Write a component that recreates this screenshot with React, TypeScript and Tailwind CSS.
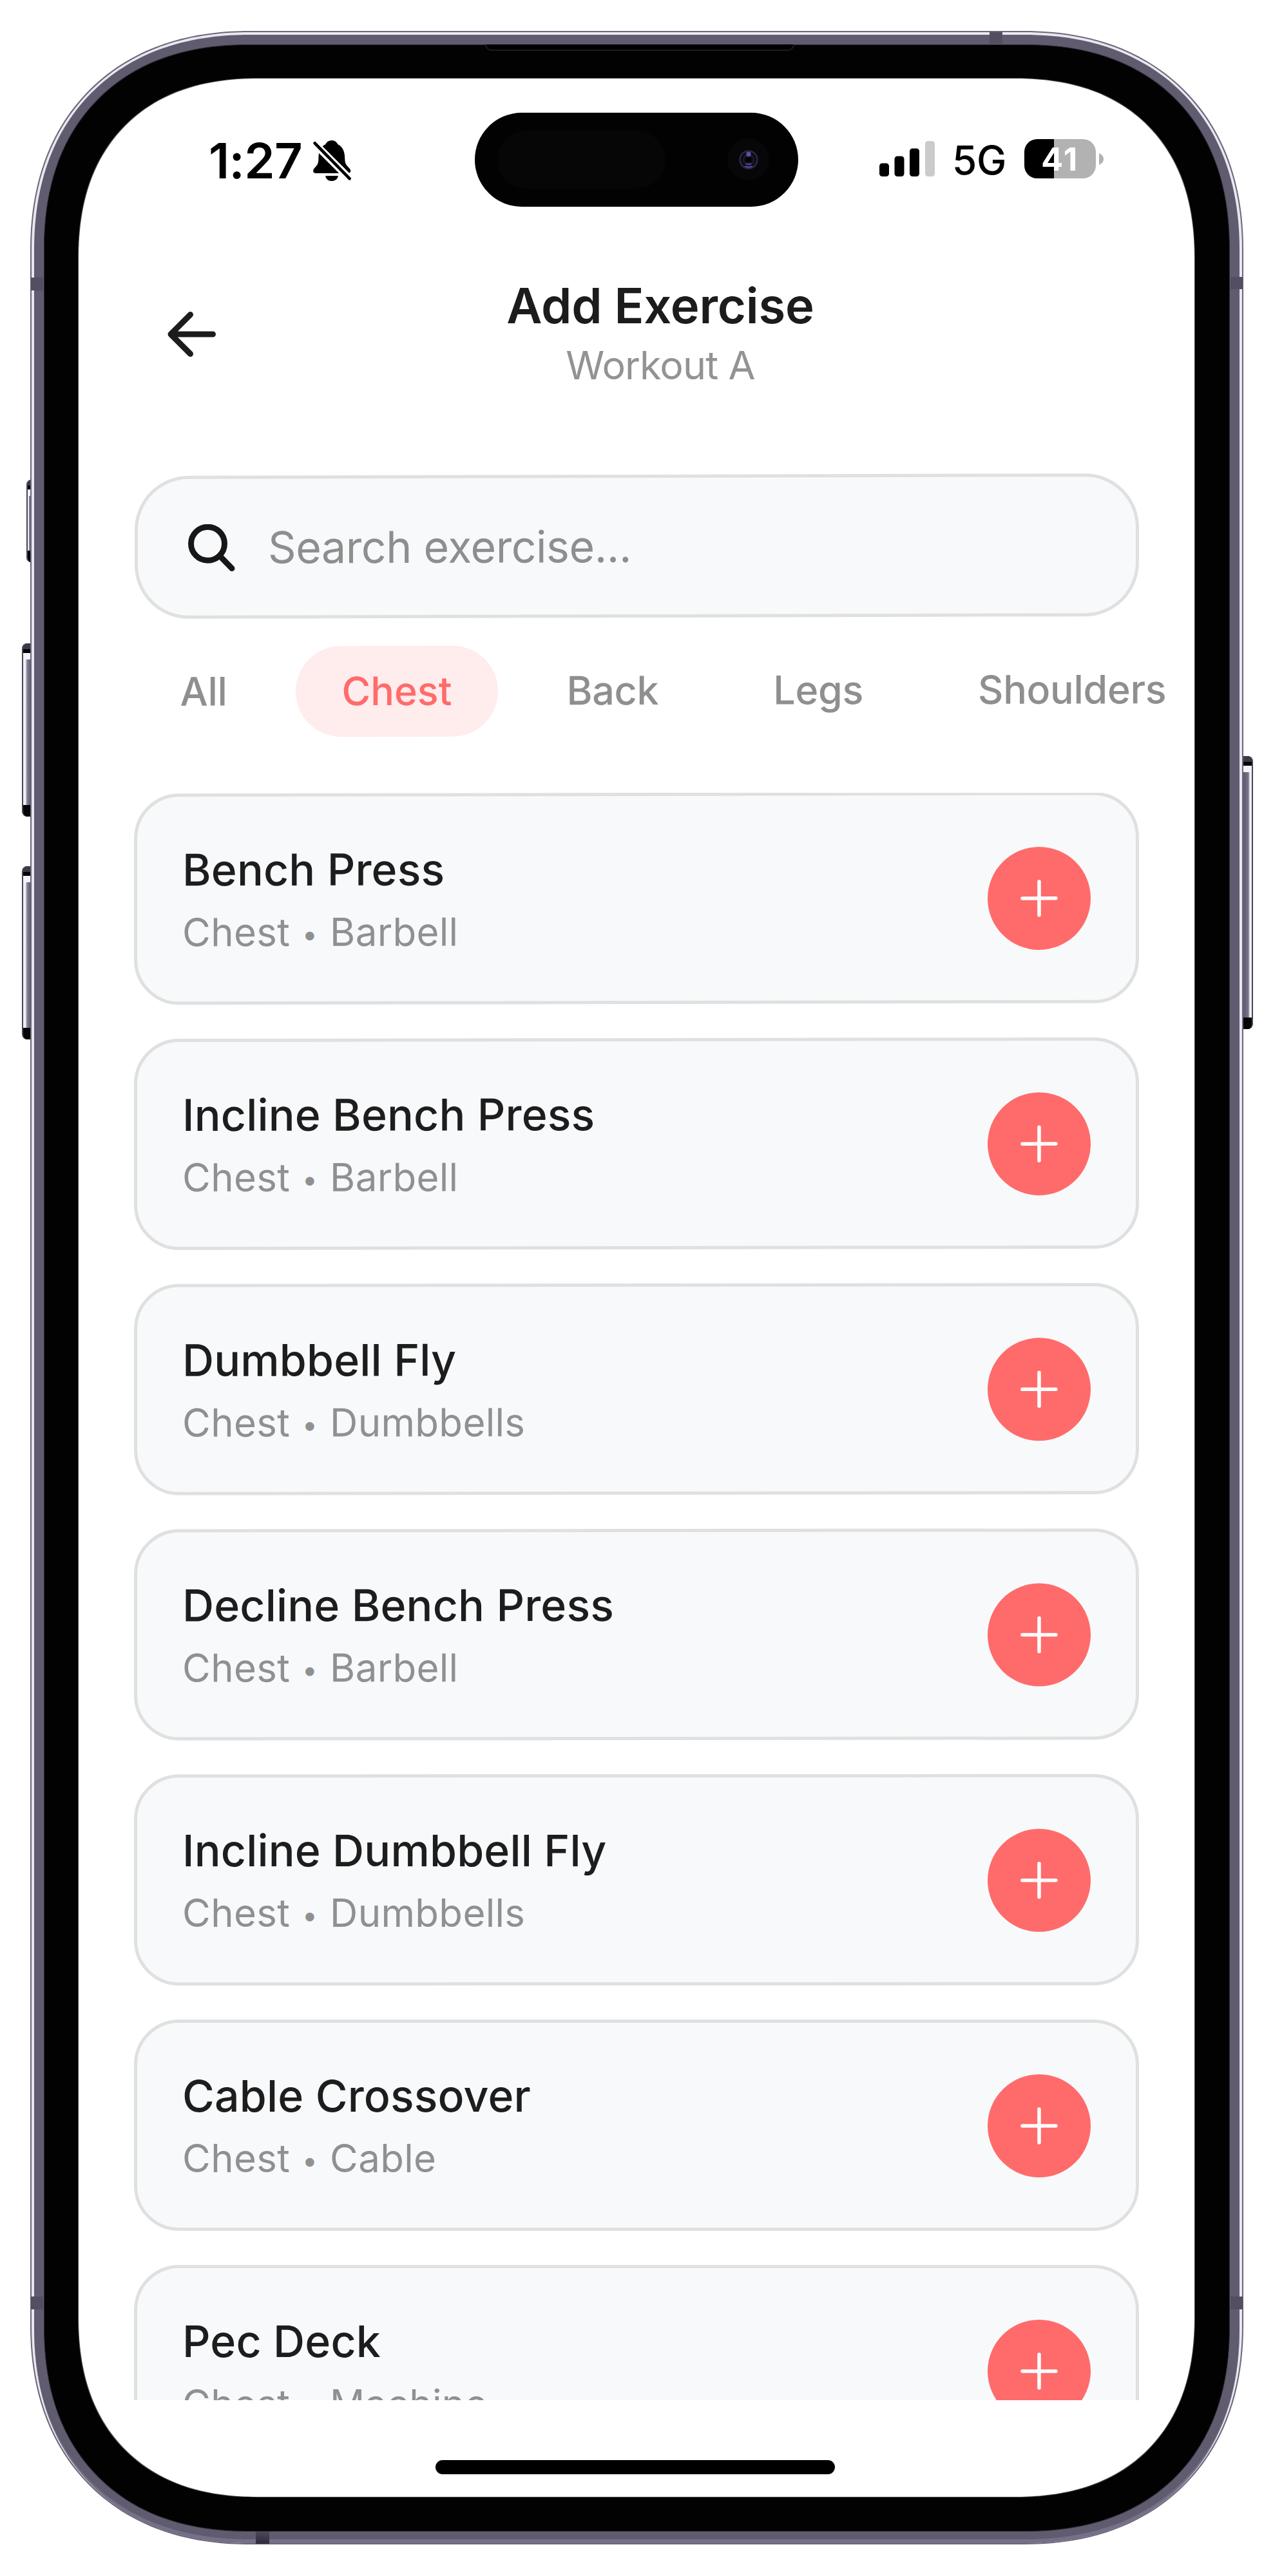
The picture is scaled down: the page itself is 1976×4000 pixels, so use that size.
type Exercise = { name: string; muscle: string; gear: string; tilt: string };

const exercises: Exercise[] = [
  { name: "Bench Press", muscle: "Chest", gear: "Barbell", tilt: "-skew-y-[0.1deg]" },
  { name: "Incline Bench Press", muscle: "Chest", gear: "Barbell", tilt: "-skew-y-[0.08deg]" },
  { name: "Dumbbell Fly", muscle: "Chest", gear: "Dumbbells", tilt: "-skew-y-[0.06deg]" },
  { name: "Decline Bench Press", muscle: "Chest", gear: "Barbell", tilt: "-skew-y-[0.04deg]" },
  { name: "Incline Dumbbell Fly", muscle: "Chest", gear: "Dumbbells", tilt: "-skew-y-[0.02deg]" },
  { name: "Cable Crossover", muscle: "Chest", gear: "Cable", tilt: "" },
  { name: "Pec Deck", muscle: "Chest", gear: "Machine", tilt: "" },
];

const filters = ["All", "Chest", "Back", "Legs", "Shoulders"];

function BellOff() {
  return (
    <svg className="ml-[17px] h-[63px] w-[59px] shrink-0" viewBox="0 0 176 188">
      <path
        d="M86 0C101 0 109 8 115 19C139 30 147 56 147 84C147 110 156 117 168 129C179 142 174 152 160 152H14C-1 152 -3 140 5 130C18 115 25 110 25 84C25 56 33 30 57 19C63 8 71 0 86 0Z"
        fill="#000"
      />
      <path d="M57 164H116C114 179 102 188 86 188C70 188 59 179 57 164Z" fill="#000" />
      <path d="M-6 2L184 192" stroke="#fff" strokeWidth="34" />
      <path d="M8 13L169 177" stroke="#000" strokeWidth="14" strokeLinecap="round" />
    </svg>
  );
}

function SignalBars() {
  return (
    <svg className="h-[55px] w-[86px] shrink-0" viewBox="0 0 86 55">
      <rect x="0" y="34.5" width="15" height="20.5" rx="4.5" fill="#000" />
      <rect x="23.5" y="23.5" width="15" height="31.5" rx="4.5" fill="#000" />
      <rect x="47" y="11.5" width="15" height="43.5" rx="4.5" fill="#000" />
      <rect x="71" y="0" width="15" height="55" rx="4.5" fill="#cbcbcb" />
    </svg>
  );
}

function Battery() {
  return (
    <div className="ml-[28px] flex items-center">
      <div className="flex h-[61px] w-[111px] items-center justify-center rounded-[20px] bg-linear-to-r from-black from-[41.5%] to-[#b2b2b2] to-[41.5%]">
        <span className="text-[50px] leading-none font-bold tracking-[2.5px] text-white">41</span>
      </div>
      <svg className="ml-[5px] h-[18px] w-[7px]" viewBox="0 0 7 18">
        <path d="M0 0C4 1.5 7 5 7 9C7 13 4 16.5 0 18Z" fill="#b2b2b2" />
      </svg>
    </div>
  );
}

function StatusBar() {
  return (
    <div className="flex h-[252px] shrink-0 items-center text-black">
      <div className="flex w-[615px] items-center pt-[2px] pl-[202px]">
        <span className="text-[76px] leading-none font-semibold tracking-[-0.6px]">1:27</span>
        <BellOff />
      </div>
      <div className="mt-[-1px] flex h-[146px] w-[502px] items-center rounded-full bg-[#020202] pl-[35px]">
        <div className="h-[90px] w-[261px] rounded-full bg-[#060606]" />
        <div className="ml-[96px] flex size-[65px] items-center justify-center rounded-full bg-[#070709]">
          <svg className="size-[30px]" viewBox="0 0 30 30">
            <circle cx="15" cy="15" r="13.5" fill="#0b0b12" stroke="#2b2842" strokeWidth="2.5" />
            <circle cx="15" cy="15" r="8" fill="none" stroke="#1c1a2a" strokeWidth="2.5" />
            <rect x="11.500" y="3" width="7" height="7" rx="2" fill="#5b50a8" />
            <path d="M9 25Q15 28 21 25M11 21Q15 23 19 21" stroke="#51479a" strokeWidth="2.5" fill="none" />
            <rect x="11" y="12" width="8" height="6" rx="2" fill="#000" />
          </svg>
        </div>
      </div>
      <div className="mt-[-3px] flex w-[615px] items-center pl-[126px]">
        <SignalBars />
        <span className="mt-[4px] ml-[27px] text-[62px] leading-none font-medium tracking-[-0.3px]">5G</span>
        <Battery />
      </div>
    </div>
  );
}

function Header() {
  return (
    <header className="flex shrink-0 items-center pt-[56px] pl-[138px]">
      <svg className="mt-[4px] h-[72px] w-[75px]" viewBox="0 0 75 72" fill="none" stroke="#1c1c1c" strokeWidth="9" strokeLinecap="round" strokeLinejoin="round">
        <path d="M70.500 36H5M35.500 5.500L5 36L35.500 66.500" />
      </svg>
      <div className="ml-[451px] flex w-[478px] flex-col items-center">
        <h1 className="-mt-[2px] text-[76px] leading-[92px] font-semibold tracking-[-0.2px] whitespace-nowrap text-[#1c1c1c]">Add Exercise</h1>
        <p className="mt-[10px] text-[61px] leading-[74px] tracking-[-0.9px] whitespace-nowrap text-[#939393]">Workout A</p>
      </div>
    </header>
  );
}

function SearchBox() {
  return (
    <div className="mt-[133px] ml-[87px] flex h-[222px] w-[1559px] shrink-0 -skew-y-[0.15deg] items-center rounded-[84px] border-[5px] border-[#dfe0e0] bg-[#f8f9fb] pl-[78px]">
      <svg className="mt-[2px] h-[74px] w-[73px]" viewBox="0 0 73 74" fill="none" stroke="#171717" strokeWidth="9" strokeLinecap="round">
        <circle cx="30.500" cy="30.500" r="26" />
        <path d="M49.500 50L68 69" />
      </svg>
      <span className="ml-[51px] text-[68px] leading-none tracking-[-0.45px] text-[#8d8f8f]">Search exercise...</span>
    </div>
  );
}

function Filters() {
  return (
    <nav className="mt-[43px] ml-[86px] flex h-[141px] shrink-0 -skew-y-[0.13deg] gap-[35px]">
      {filters.map((f) => (
        <div
          key={f}
          className={
            f === "Chest"
              ? "flex items-center rounded-full bg-[#ffecec] px-[71.500px] text-[61px] leading-none font-medium text-[#ff6b6b]"
              : "flex items-center rounded-full px-[71.500px] text-[61px] leading-none font-medium tracking-[-0.3px] text-[#8f8f8f]"
          }
        >
          {f}
        </div>
      ))}
    </nav>
  );
}

function ExerciseCard({ name, muscle, gear, tilt }: Exercise) {
  return (
    <li className={`flex h-[328px] w-[1560px] shrink-0 items-center justify-between rounded-[70px] border-[5px] border-[#dfe0e0] bg-[#f8f9fb] pr-[70px] pl-[70px] ${tilt}`}>
      <div className="pb-[1px]">
        <h2 className="text-[68px] leading-[82px] font-medium tracking-[0.15px] text-[#1d1d1d]">{name}</h2>
        <p className="mt-[20px] text-[60px] leading-[72px] tracking-[0.3px] text-[#8f9191]">
          {muscle}
          <span className="relative -top-[3px] inline-block w-[62px] text-center text-[43px] leading-none">•</span>
          {gear}
        </p>
      </div>
      <button className="mt-[2px] flex size-[160px] items-center justify-center rounded-full bg-[#ff6b6b]">
        <svg className="size-[58px]" viewBox="0 0 58 58" stroke="#fff" strokeWidth="5.500" strokeLinecap="round">
          <path d="M29 3V55M3 29H55" />
        </svg>
      </button>
    </li>
  );
}

function Screen() {
  return (
    <div className="flex h-[3755px] w-[1732px] flex-col overflow-hidden rounded-[280px] bg-white shadow-[0_0_0_1px_#4a4a4a] [corner-shape:superellipse(1.2)]">
      <StatusBar />
      <Header />
      <SearchBox />
      <Filters />
      <ul className="mt-[88px] flex h-[2496px] shrink-0 flex-col gap-[53px] overflow-hidden pl-[86px]">
        {exercises.map((e) => (
          <ExerciseCard key={e.name} {...e} />
        ))}
      </ul>
      <div className="mt-[93px] ml-[554px] h-[22px] w-[620px] shrink-0 rounded-full bg-black" />
    </div>
  );
}

function SideKey({ place, right }: { place: string; right?: boolean }) {
  return (
    <div
      className={`absolute flex flex-col overflow-hidden bg-[#5f5a6e] ${place} ${
        right ? "rounded-r-[8px] border-r-2 border-[#4a4656]" : "rounded-l-[8px] border-l-2 border-[#4a4656]"
      }`}
    >
      <div className="h-[9px] bg-[#3d3947]" />
      <div className="h-[6px] bg-black" />
      <div className="h-[10px] bg-[#f4f3f8]" />
      <div
        className={
          right
            ? "flex-1 bg-linear-to-l from-[#efedf5] from-[22%] via-[#79738a] via-[38%] to-[#5b566a]"
            : "flex-1 bg-linear-to-r from-[#efedf5] from-[32%] via-[#8a859b] via-[48%] to-[#5b566a]"
        }
      />
      <div className="h-[18px] bg-[#050506]" />
    </div>
  );
}

export default function App() {
  return (
    <div className="h-[4000px] w-[1976px] overflow-hidden bg-white pt-[48px] pl-[47px] font-['Inter',sans-serif]">
      <div className="relative w-[1883px]">
        <SideKey place="-left-[6px] top-[697px] h-[128px] w-[7px]" />
        <SideKey place="-left-[13px] top-[951px] h-[269px] w-[14px]" />
        <SideKey place="-left-[13px] top-[1297px] h-[269px] w-[14px]" />
        <SideKey place="-right-[15px] top-[1126px] h-[424px] w-[16px]" right />

        <div className="relative rounded-[340px] bg-[#6b6778] p-[2px] [corner-shape:superellipse(1.14)]">
          <div className="rounded-[338px] bg-[#e9e7f0] px-[4px] pt-[4px] [corner-shape:superellipse(1.14)]">
            <div className="rounded-[334px] border-b-[6px] border-[#757088] bg-[#615b70] px-[15px] pt-[15px] pb-[12px] [corner-shape:superellipse(1.15)]">
              <div className="rounded-[318px] border border-[#2d2a36] bg-[#020202] pt-[52px] pr-[54px] pb-[53px] pl-[53px] [corner-shape:superellipse(1.17)]">
                <Screen />
              </div>
            </div>
          </div>
        </div>

        <div className="absolute top-[383px] left-[1px] h-[20px] w-[19px] bg-[#544e63]" />
        <div className="absolute top-[382px] right-[1px] h-[19px] w-[19px] bg-[#544e63]" />
        <div className="absolute top-[3518px] left-[1px] h-[20px] w-[19px] bg-[#544e63]" />
        <div className="absolute top-[3518px] right-[1px] h-[20px] w-[19px] bg-[#544e63]" />
        <div className="absolute top-[2px] left-[1489px] h-[18px] w-[20px] bg-[#544e63]" />
        <div className="absolute bottom-[1px] left-[350px] h-[19px] w-[21px] bg-linear-to-b from-[#4c475a] to-[#2f2c3a]" />
        <div className="absolute top-[21px] left-[706px] h-[10px] w-[480px] rounded-b-[12px] border-x-2 border-b-2 border-[#1c1c1e] bg-black" />
      </div>
    </div>
  );
}
